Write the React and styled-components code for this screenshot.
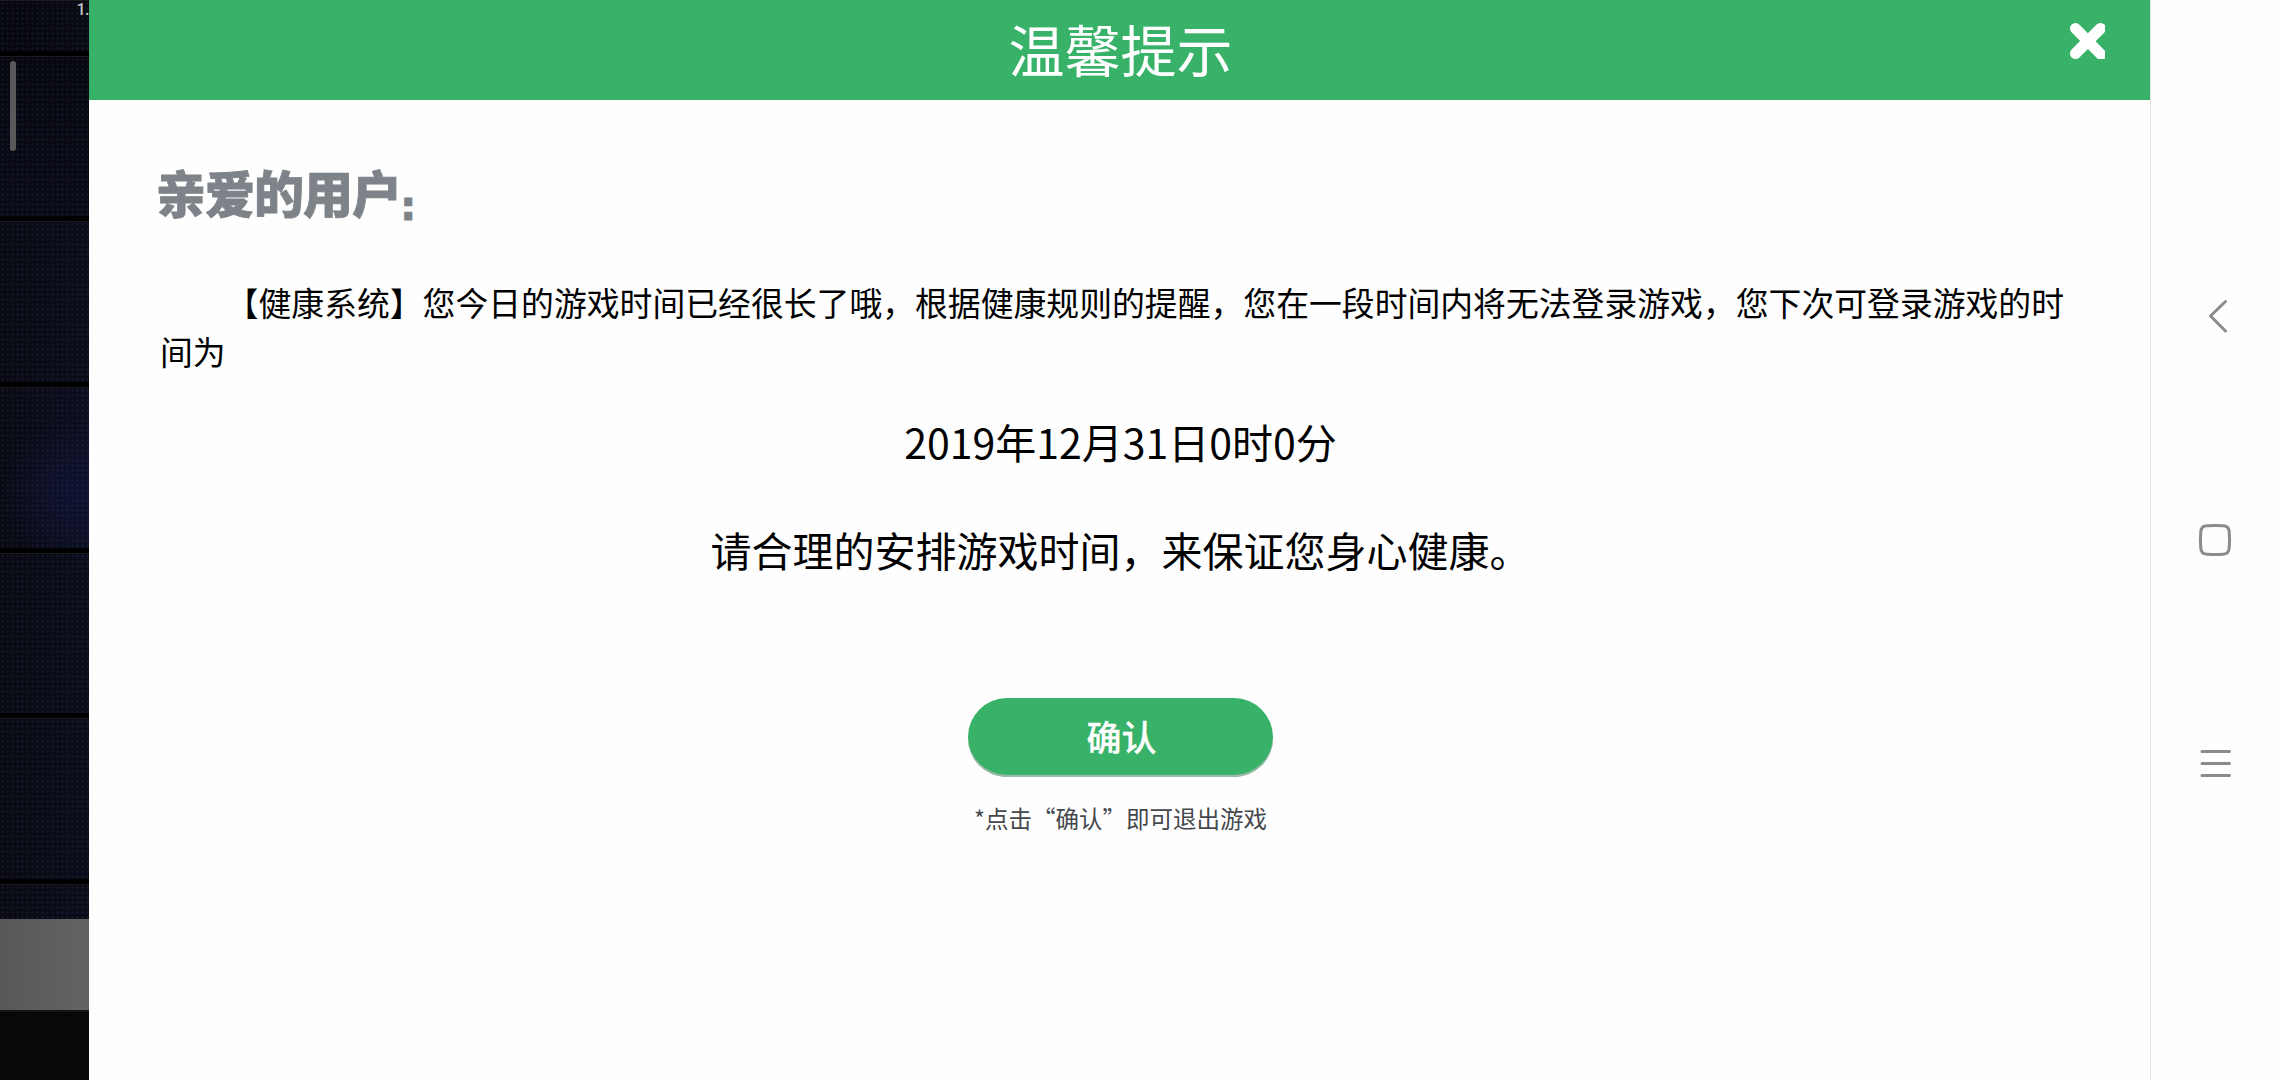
import React from 'react';
import styled, { createGlobalStyle } from 'styled-components';

const GlobalStyle = createGlobalStyle`
    * {
        box-sizing: border-box;
    }
    body {
        margin: 0;
        background: #fff;
        font-family: "Noto Sans CJK SC", sans-serif;
        overflow: hidden;
    }
`
const Screen = styled.div`
    display: flex;
    width: 2280px;
    height: 1080px;
    background: #fefefe;
`
const Backdrop = styled.div`
    display: flex;
    flex-direction: column;
    position: relative;
    flex: 0 0 89px;
    background: #000;
`
const Tile = styled.div`
    flex: 0 0 ${props => props.$height}px;
    margin-bottom: ${props => props.$gap}px;
    border-top: 1px solid #1b1a1f;
    background:
        radial-gradient(circle, rgba(70, 75, 115, 0.22) 0.8px, transparent 1.4px) 0 0 / 5px 5px,
        ${props => props.$fill};
`
const Strip = styled.div`
    flex: 0 0 91px;
    background: linear-gradient(90deg, #575757, #646464);
`
const Footer = styled.div`
    flex: 1;
    border-top: 2px solid #17130f;
    background: #070808;
`
const Version = styled.span`
    position: absolute;
    top: 0;
    right: 0;
    color: #c4c4c4;
    font-family: Roboto, sans-serif;
    font-size: 16px;
    font-weight: 500;
    line-height: 19px;
    letter-spacing: -0.5px;
`
const ScrollThumb = styled.div`
    position: absolute;
    top: 61px;
    left: 10px;
    width: 6px;
    height: 90px;
    border-radius: 3px;
    background: #59595b;
`
const Dialog = styled.main`
    flex: 0 0 2061px;
    display: flex;
    flex-direction: column;
    background: #fefefe;
`
const Header = styled.header`
    display: grid;
    grid-template-columns: 100px 1fr 98px;
    height: 100px;
    background: #38b269;
`
const Title = styled.h1`
    grid-column: 2;
    margin: 0;
    color: #fff;
    font-size: 56px;
    font-weight: 400;
    line-height: 96px;
    text-align: center;
`
const CloseButton = styled.button`
    justify-self: end;
    align-self: start;
    width: 35px;
    height: 36px;
    margin: 23px 45px 0 0;
    padding: 0;
    border: none;
    background: none;

    svg {
        display: block;
    }
`
const Content = styled.div`
    display: flex;
    flex-direction: column;
    align-items: center;
    padding: 61px 70px 0 72px;
`
const Greeting = styled.h2`
    align-self: flex-start;
    display: flex;
    align-items: flex-end;
    height: 60px;
    margin: 0 0 56px -5px;
    color: #7e8389;
    font-size: 50px;
    font-weight: 900;
    line-height: 60px;
    letter-spacing: -1px;
    -webkit-text-stroke: 0.8px #7e8389;
`
const Colon = styled.span`
    margin: 0 0 -5px -1px;
    font-family: "DejaVu Sans", sans-serif;
    font-size: 41px;
    font-weight: 700;
    line-height: 40px;
`
const Message = styled.p`
    align-self: flex-start;
    width: 1919px;
    margin: 0 0 0 -1px;
    color: #000;
    font-size: 32.83px;
    line-height: 49px;
    text-indent: 2em;
`
const Line = styled.p`
    margin: ${props => props.$top}px 0 0;
    color: #000;
    font-size: 41px;
    line-height: 60px;
    white-space: nowrap;
`
const ConfirmButton = styled.button`
    width: 305px;
    height: 79px;
    margin-top: 119px;
    padding: 0 0 3px 2px;
    border: none;
    border-radius: 39px;
    background: #38b269;
    box-shadow: inset 0 -2px 0 #9fb9aa;
    color: #fff;
    font-family: inherit;
    font-size: 35px;
    font-weight: 500;
    line-height: 76px;
    -webkit-text-stroke: 0.3px #fff;
`
const Note = styled.p`
    margin: 21px 0 0;
    color: #45484d;
    font-size: 23.5px;
    line-height: 40px;
`
const NavBar = styled.nav`
    flex: 1;
    display: flex;
    flex-direction: column;
    align-items: center;
    gap: 184px;
    padding: 296px 2px 0 0;
    border-left: 1px solid #e2e2e2;
    background: #fefefe;

    svg {
        flex: none;
        fill: none;
        stroke: #8b8b8b;
        stroke-width: 3;
        stroke-linecap: round;
        stroke-linejoin: round;
    }
`

const night = 'linear-gradient(90deg, #090a12, #0b0d1b)';
const glow = 'radial-gradient(circle at 75px 105px, #0f1230, transparent 75px), linear-gradient(90deg, #090a12, #0c0e20)';

const tiles = [
    { height: 51, gap: 5, fill: 'linear-gradient(90deg, #07080e, #090a13)' },
    { height: 160, gap: 5, fill: 'linear-gradient(#07080f, #0a0b18)' },
    { height: 161, gap: 5, fill: night },
    { height: 161, gap: 5, fill: glow },
    { height: 160, gap: 5, fill: night },
    { height: 161, gap: 5, fill: night },
    { height: 35, gap: 0, fill: night },
];

const App = () => {
    return (
        <Screen>
            <GlobalStyle />
            <Backdrop>
                {tiles.map((tile, index) => (
                    <Tile key={index} $height={tile.height} $gap={tile.gap} $fill={tile.fill} />
                ))}
                <Strip />
                <Footer />
                <Version>1.</Version>
                <ScrollThumb />
            </Backdrop>
            <Dialog>
                <Header>
                    <Title>温馨提示</Title>
                    <CloseButton aria-label="关闭">
                        <svg width="35" height="36" viewBox="0 0 35 36">
                            <path d="M5.5 5.5 31 31.5M30.5 5.5 5.5 30.5" stroke="#fff" strokeWidth="11" strokeLinecap="round" />
                        </svg>
                    </CloseButton>
                </Header>
                <Content>
                    <Greeting>亲爱的用户<Colon>:</Colon></Greeting>
                    <Message>
                        【健康系统】您今日的游戏时间已经很长了哦，根据健康规则的提醒，您在一段时间内将无法登录游戏，您下次可登录游戏的时间为
                    </Message>
                    <Line $top={36}>2019年12月31日0时0分</Line>
                    <Line $top={48}>请合理的安排游戏时间，来保证您身心健康。</Line>
                    <ConfirmButton>确认</ConfirmButton>
                    <Note>*点击“确认”即可退出游戏</Note>
                </Content>
            </Dialog>
            <NavBar>
                <svg width="40" height="40" viewBox="0 0 40 40">
                    <path d="M30.5 5.5 15.5 20 30.5 35" />
                </svg>
                <svg width="40" height="40" viewBox="0 0 40 40">
                    <path d="M12 5.8Q20 5 28 5.8Q34 6 34.2 12Q35 20 34.2 28Q34 34 28 34.2Q20 35 12 34.2Q6 34 5.8 28Q5 20 5.8 12Q6 6 12 5.8Z" />
                </svg>
                <svg width="40" height="40" viewBox="0 0 40 40">
                    <path d="M7 7.5H34.5M7 19.5H34.5M7 31.5H34.5" />
                </svg>
            </NavBar>
        </Screen>
    );
};

export default App;
